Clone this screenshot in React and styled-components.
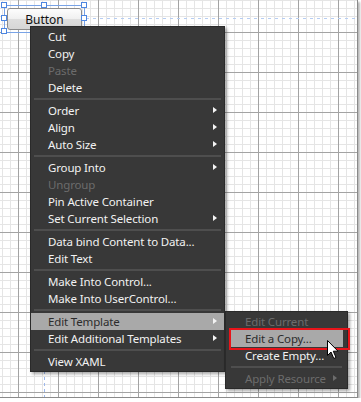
import React from "react";
import styled, { createGlobalStyle } from "styled-components";

const GlobalStyle = createGlobalStyle`
  html, body { margin: 0; padding: 0; background: #ffffff; }
  * { box-sizing: border-box; }
`;

const Frame = styled.div`
  position: relative;
  width: 358px;
  height: 398px;
  overflow: hidden;
  border-right: 1px solid #8a8a8a;
  border-bottom: 1px solid #8a8a8a;
  box-shadow: 2px 2px 2px rgba(0, 0, 0, 0.28);
  background-color: #ffffff;
  background-image:
    linear-gradient(to right, #a3a3a3 1px, transparent 1px),
    linear-gradient(to bottom, #a3a3a3 1px, transparent 1px),
    linear-gradient(to right, #e5e5e5 1px, transparent 1px),
    linear-gradient(to bottom, #e5e5e5 1px, transparent 1px);
  background-size: 40px 40px, 40px 40px, 8px 8px, 8px 8px;
  background-position: 18px 0, 0 32px, 2px 0, 0 0;
  font-family: "Noto Sans", "Open Sans", sans-serif;
`;

const Selection = styled.div`
  position: absolute;
  left: 4px;
  top: 5px;
  width: 81px;
  height: 28px;
  padding: 2px;
  border: 1px solid #79a3e6;
`;

const Handle = styled.span`
  position: absolute;
  width: 6px;
  height: 6px;
  background: #ffffff;
  border: 1px solid #4d86e0;
  left: ${(p) => p.$x}px;
  top: ${(p) => p.$y}px;
`;

const ButtonBox = styled.div`
  width: 75px;
  height: 22px;
  border: 1px solid #8c8c8c;
  border-radius: 3px;
  background: linear-gradient(to bottom, #fdfdfd 0%, #f0f0f0 50%, #dedede 51%, #d6d6d6 100%);
  display: flex;
  align-items: center;
  justify-content: center;
  font-size: 12px;
  color: #111;
`;

const GuideH = styled.div`
  position: absolute;
  left: 86px;
  top: 18px;
  width: 280px;
  height: 1px;
  background-image: linear-gradient(to right, #b6cdf3 3px, transparent 3px);
  background-size: 7px 1px;
`;

const GuideV = styled.div`
  position: absolute;
  left: 44px;
  top: 371px;
  width: 1px;
  height: 30px;
  background-image: linear-gradient(to bottom, #9cb8ec 3px, transparent 3px);
  background-size: 1px 6px;
`;

const Menu = styled.div`
  position: absolute;
  left: ${(p) => p.$x}px;
  top: ${(p) => p.$y}px;
  width: ${(p) => p.$w}px;
  display: flex;
  flex-direction: column;
  padding: 1px ${(p) => p.$pad}px 1px;
  background: #383838;
  border: 1px solid #2a2a2a;
  box-shadow: 2px 2px 3px rgba(0, 0, 0, 0.35);
`;

const Item = styled.div`
  position: relative;
  height: 17px;
  display: flex;
  align-items: center;
  padding-left: ${(p) => p.$indent}px;
  padding-bottom: 1px;
  font-size: 11.5px;
  letter-spacing: -0.15px;
  white-space: nowrap;
  color: ${(p) => (p.$active ? "#2c2c2c" : p.$disabled ? "#6c6c6c" : "#f2f2f2")};
  background: ${(p) => (p.$active ? "#a9a9a9" : "transparent")};
`;

const Arrow = styled.span`
  position: absolute;
  right: ${(p) => p.$right}px;
  top: 5px;
  width: 0;
  height: 0;
  border-top: 3.5px solid transparent;
  border-bottom: 3.5px solid transparent;
  border-left: 4px solid ${(p) => (p.$disabled ? "#6c6c6c" : "#f4f4f4")};
`;

const Separator = styled.div`
  height: 6px;
  display: flex;
  align-items: center;
  padding: 0 ${(p) => p.$inset}px;
  &::after {
    content: "";
    flex: 1;
    height: 2px;
    background: #4e4e4e;
  }
`;

const Highlight = styled.div`
  position: absolute;
  left: 229px;
  top: 328px;
  width: 121px;
  height: 22px;
  border: 2px solid #e8141a;
`;

const Cursor = styled.svg`
  position: absolute;
  left: 327px;
  top: 340px;
`;

const mainGroups = [
  [
    { t: "Cut" },
    { t: "Copy" },
    { t: "Paste", d: true },
    { t: "Delete" },
  ],
  [
    { t: "Order", a: true },
    { t: "Align", a: true },
    { t: "Auto Size", a: true },
  ],
  [
    { t: "Group Into", a: true },
    { t: "Ungroup", d: true },
    { t: "Pin Active Container" },
    { t: "Set Current Selection", a: true },
  ],
  [{ t: "Data bind Content to Data..." }, { t: "Edit Text" }],
  [{ t: "Make Into Control..." }, { t: "Make Into UserControl..." }],
  [
    { t: "Edit Template", a: true, h: true },
    { t: "Edit Additional Templates", a: true },
  ],
  [{ t: "View XAML" }],
];

const subGroups = [
  [
    { t: "Edit Current", d: true },
    { t: "Edit a Copy...", h: true },
    { t: "Create Empty..." },
  ],
  [{ t: "Apply Resource", d: true, a: true }],
];

function MenuList({ groups, indent, arrowRight, sepInset }) {
  return groups.map((g, gi) => (
    <React.Fragment key={gi}>
      {gi > 0 && <Separator $inset={sepInset} />}
      {g.map((it) => (
        <Item key={it.t} $indent={indent} $disabled={it.d} $active={it.h}>
          {it.t}
          {it.a && <Arrow $right={arrowRight} $disabled={it.d} />}
        </Item>
      ))}
    </React.Fragment>
  ));
}

export default function App() {
  return (
    <>
      <GlobalStyle />
      <Frame>
        <GuideH />
        <GuideV />
        <Selection>
          <ButtonBox>Button</ButtonBox>
          <Handle $x={-4} $y={-4} />
          <Handle $x={36} $y={-4} />
          <Handle $x={76} $y={-4} />
          <Handle $x={-4} $y={9} />
          <Handle $x={76} $y={9} />
          <Handle $x={-4} $y={22} />
        </Selection>
        <Menu $x={30} $y={26} $w={195} $pad={0}>
          <MenuList groups={mainGroups} indent={17} arrowRight={7} sepInset={3} />
        </Menu>
        <Menu $x={225} $y={311} $w={123} $pad={4}>
          <MenuList groups={subGroups} indent={15} arrowRight={6} sepInset={1} />
        </Menu>
        <Highlight />
        <Cursor width="13" height="20" viewBox="0 0 13 20">
          <path
            d="M0.5 0.5 L0.5 15.5 L4 12 L6.8 18.5 L9 17.5 L6.3 11.2 L11 11.2 Z"
            fill="#ffffff"
            stroke="#000000"
            strokeWidth="1"
            strokeLinejoin="miter"
          />
        </Cursor>
      </Frame>
    </>
  );
}
